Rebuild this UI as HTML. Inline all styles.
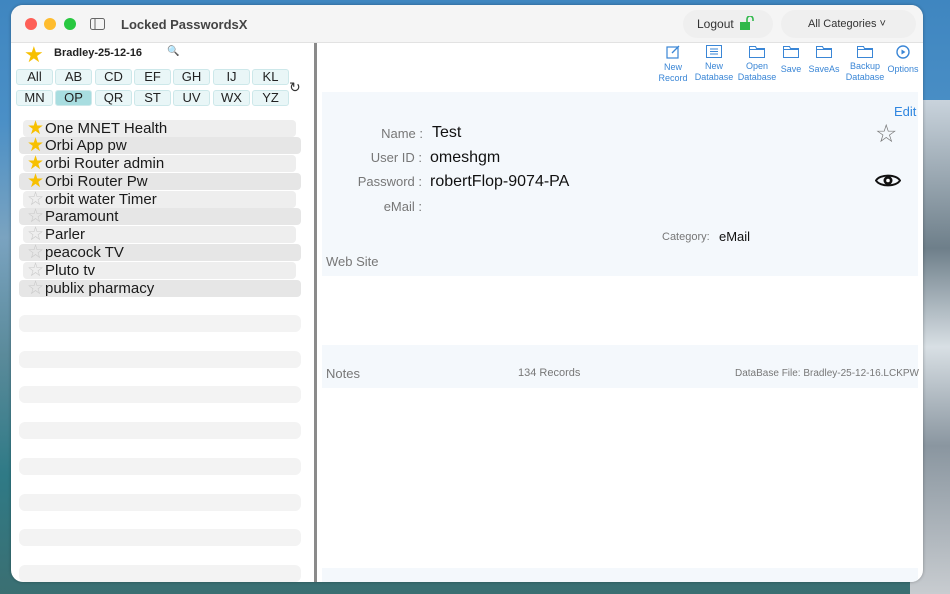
<!DOCTYPE html>
<html><head><meta charset="utf-8"><style>
*{margin:0;padding:0;box-sizing:border-box}
body{width:950px;height:594px;overflow:hidden;position:relative;font-family:"Liberation Sans",sans-serif;
background:linear-gradient(180deg,#3f86c0 0%,#4a8fc6 20%,#7aa3c0 40%,#5a8a9a 60%,#2f7a86 80%,#3b6f72 100%)}
.rocks{position:absolute;right:0;top:100px;width:40px;height:494px;background:linear-gradient(180deg,#c9d3dc,#6e7f8a 30%,#d8dfe4 50%,#8a96a0 70%,#c8ccd0)}
.win{position:absolute;left:11px;top:5px;width:912px;height:577px;background:#fff;border-radius:12px;overflow:hidden;box-shadow:0 0 3px rgba(0,0,0,.3)}
.title{position:absolute;left:0;top:0;width:912px;height:38px;background:#f5f5f5;border-bottom:1px solid #e2e2e2}
.dot{position:absolute;top:13px;width:12px;height:12px;border-radius:50%}
.abs{position:absolute;white-space:nowrap}
.btn{position:absolute;top:64px;width:37px;height:16px;background:#e9f6f7;border:1px solid #cde8ea;border-radius:3px;font-size:13px;text-align:center;line-height:14px;color:#222}
.row{position:absolute;height:17px;font-size:15px;line-height:17px;color:#1a1a1a;border-radius:4px;white-space:nowrap}
.row span{display:inline-block;width:19px;font-size:19px;line-height:17px;vertical-align:top;text-align:center}
.ph{position:absolute;left:8px;width:282px;height:17px;background:#f3f3f3;border-radius:6px}
.tb{position:absolute;top:40px;text-align:center;font-size:9px;color:#3a86d6;line-height:11px}
.lbl{position:absolute;font-size:13px;color:#777;text-align:right;width:100px}
.val{position:absolute;font-size:16px;color:#111}
</style></head><body>
<div class="rocks"></div>
<div class="win">
 <div class="title">
  <div class="dot" style="left:14px;background:#fe5f57"></div>
  <div class="dot" style="left:33px;background:#febc2e"></div>
  <div class="dot" style="left:53px;background:#28c840"></div>
  <svg class="abs" style="left:79px;top:13px" width="15" height="12"><rect x=".5" y=".5" width="14" height="11" rx="2" fill="none" stroke="#666"/><line x1="5" y1="1" x2="5" y2="11" stroke="#666"/></svg>
  <div class="abs" style="left:110px;top:12px;font-size:13px;color:#444;font-weight:bold">Locked PasswordsX</div>
  <div class="abs" style="left:672px;top:5px;width:90px;height:28px;border-radius:14px;background:#efefef"></div>
  <div class="abs" style="left:686px;top:12px;font-size:12px;color:#333">Logout</div>
  <svg class="abs" style="left:729px;top:11px" width="16" height="15"><rect x="0" y="6" width="10" height="8" fill="#2fb84a"/><path d="M7 6V3a3 3 0 0 1 6 0v2" fill="none" stroke="#2fb84a" stroke-width="1.6"/></svg>
  <div class="abs" style="left:770px;top:5px;width:135px;height:28px;border-radius:14px;background:#efefef"></div>
  <div class="abs" style="left:797px;top:13px;font-size:11px;color:#333">All Categories ˅</div>
 </div>
 <!-- left -->
 <div class="abs" style="left:13px;top:37px;font-size:22px;color:#f7c000">★</div>
 <div class="abs" style="left:43px;top:42px;font-size:11px;font-weight:bold;color:#222">Bradley-25-12-16</div>
 <div class="abs" style="left:156px;top:41px;font-size:10px;color:#555">🔍</div>
 <div class="btn" style="left:5px">All</div><div class="btn" style="left:44px">AB</div><div class="btn" style="left:84px">CD</div><div class="btn" style="left:123px">EF</div><div class="btn" style="left:162px">GH</div><div class="btn" style="left:202px">IJ</div><div class="btn" style="left:241px">KL</div>
 <div class="btn" style="top:85px;left:5px">MN</div><div class="btn" style="top:85px;left:44px;background:#a8dde0">OP</div><div class="btn" style="top:85px;left:84px">QR</div><div class="btn" style="top:85px;left:123px">ST</div><div class="btn" style="top:85px;left:162px">UV</div><div class="btn" style="top:85px;left:202px">WX</div><div class="btn" style="top:85px;left:241px">YZ</div>
 <div class="abs" style="left:278px;top:74px;font-size:14px;color:#333">↻</div>
 <div class="row" style="left:12px;top:115px;width:273px;background:#eeeeee;padding-left:3px"><span style="color:#f7c000">★</span>One MNET Health</div>
 <div class="row" style="left:8px;top:132px;width:282px;background:#e6e6e6;padding-left:7px"><span style="color:#f7c000">★</span>Orbi App pw</div>
 <div class="row" style="left:12px;top:150px;width:273px;background:#eeeeee;padding-left:3px"><span style="color:#f7c000">★</span>orbi Router admin</div>
 <div class="row" style="left:8px;top:168px;width:282px;background:#e6e6e6;padding-left:7px"><span style="color:#f7c000">★</span>Orbi Router Pw</div>
 <div class="row" style="left:12px;top:186px;width:273px;background:#eeeeee;padding-left:3px"><span style="color:#c8c8c8">☆</span>orbit water Timer</div>
 <div class="row" style="left:8px;top:203px;width:282px;background:#e6e6e6;padding-left:7px"><span style="color:#c8c8c8">☆</span>Paramount</div>
 <div class="row" style="left:12px;top:221px;width:273px;background:#eeeeee;padding-left:3px"><span style="color:#c8c8c8">☆</span>Parler</div>
 <div class="row" style="left:8px;top:239px;width:282px;background:#e6e6e6;padding-left:7px"><span style="color:#c8c8c8">☆</span>peacock TV</div>
 <div class="row" style="left:12px;top:257px;width:273px;background:#eeeeee;padding-left:3px"><span style="color:#c8c8c8">☆</span>Pluto tv</div>
 <div class="row" style="left:8px;top:275px;width:282px;background:#e6e6e6;padding-left:7px"><span style="color:#c8c8c8">☆</span>publix pharmacy</div>
 <div class="ph" style="top:310px"></div><div class="ph" style="top:346px"></div><div class="ph" style="top:381px"></div><div class="ph" style="top:417px"></div><div class="ph" style="top:453px"></div><div class="ph" style="top:489px"></div><div class="ph" style="top:524px"></div><div class="ph" style="top:560px"></div>
 <div class="abs" style="left:303px;top:38px;width:3px;height:540px;background:#8a8a8a"></div>
 <!-- toolbar -->
 <div class="tb" style="left:645px;width:34px"><svg width="14" height="14"><rect x="1" y="2" width="11" height="11" fill="none" stroke="#3a86d6" stroke-width="1.2"/><path d="M6 8l7-7" stroke="#3a86d6" stroke-width="1.3"/></svg><br>New<br>Record</div>
 <div class="tb" style="left:683px;top:40px;width:40px"><svg width="16" height="13"><rect x=".5" y=".5" width="15" height="12" fill="none" stroke="#3a86d6"/><path d="M4 4h8M4 6.5h8M4 9h8" stroke="#3a86d6"/></svg><br>New<br>Database</div>
 <div class="tb" style="left:725px;width:42px"><svg width="16" height="13"><path d="M.5 2.5v10h15v-9h-8l-1-2h-6z M.5 4.5h15" fill="none" stroke="#3a86d6"/></svg><br>Open<br>Database</div>
 <div class="tb" style="left:768px;width:24px"><svg width="16" height="13"><path d="M.5 2.5v10h15v-9h-8l-1-2h-6z M.5 4.5h15" fill="none" stroke="#3a86d6"/></svg><br><span style="line-height:16px">Save</span></div>
 <div class="tb" style="left:796px;width:34px"><svg width="16" height="13"><path d="M.5 2.5v10h15v-9h-8l-1-2h-6z M.5 4.5h15" fill="none" stroke="#3a86d6"/></svg><br><span style="line-height:16px">SaveAs</span></div>
 <div class="tb" style="left:834px;width:40px"><svg width="16" height="13"><path d="M.5 2.5v10h15v-9h-8l-1-2h-6z M.5 4.5h15" fill="none" stroke="#3a86d6"/></svg><br>Backup<br>Database</div>
 <div class="tb" style="left:874px;width:36px"><svg width="14" height="14"><circle cx="7" cy="7" r="6" fill="none" stroke="#3a86d6" stroke-width="1.4"/><path d="M5.5 4.5l4 2.5-4 2.5z" fill="#3a86d6"/></svg><br><span style="line-height:14px">Options</span></div>
 <!-- detail -->
 <div class="abs" style="left:311px;top:87px;width:596px;height:184px;background:#f4f8fc"></div>
 <div class="abs" style="left:311px;top:340px;width:596px;height:43px;background:#f4f8fc"></div>
 <div class="abs" style="left:311px;top:563px;width:596px;height:14px;background:#f4f8fc"></div>
 <div class="abs" style="left:883px;top:99px;font-size:13px;color:#2f86e0">Edit</div>
 <div class="lbl" style="left:312px;top:121px">Name :</div><div class="val" style="left:421px;top:119px">Test</div>
 <div class="lbl" style="left:311px;top:145px">User ID :</div><div class="val" style="left:419px;top:144px">omeshgm</div>
 <div class="lbl" style="left:311px;top:169px">Password :</div><div class="val" style="left:419px;top:168px">robertFlop-9074-PA</div>
 <div class="lbl" style="left:311px;top:194px">eMail :</div>
 <div class="abs" style="left:651px;top:226px;font-size:11px;color:#777">Category:</div>
 <div class="abs" style="left:708px;top:224px;font-size:13px;color:#111">eMail</div>
 <div class="abs" style="left:315px;top:249px;font-size:13px;color:#777">Web Site</div>
 <div class="abs" style="left:864px;top:114px;font-size:25px;color:#777">☆</div>
 <svg class="abs" style="left:864px;top:167px" width="26" height="17"><path d="M1 8.5C5 2 21 2 25 8.5C21 15 5 15 1 8.5Z" fill="none" stroke="#111" stroke-width="2"/><circle cx="13" cy="8.5" r="4.5" fill="#111"/><circle cx="13" cy="8.5" r="1.8" fill="#fff"/></svg>
 <div class="abs" style="left:315px;top:361px;font-size:13px;color:#777">Notes</div>
 <div class="abs" style="left:507px;top:362px;font-size:11px;color:#777">134 Records</div>
 <div class="abs" style="left:724px;top:363px;font-size:10px;color:#777">DataBase File: Bradley-25-12-16.LCKPW</div>
</div>
</body></html>
